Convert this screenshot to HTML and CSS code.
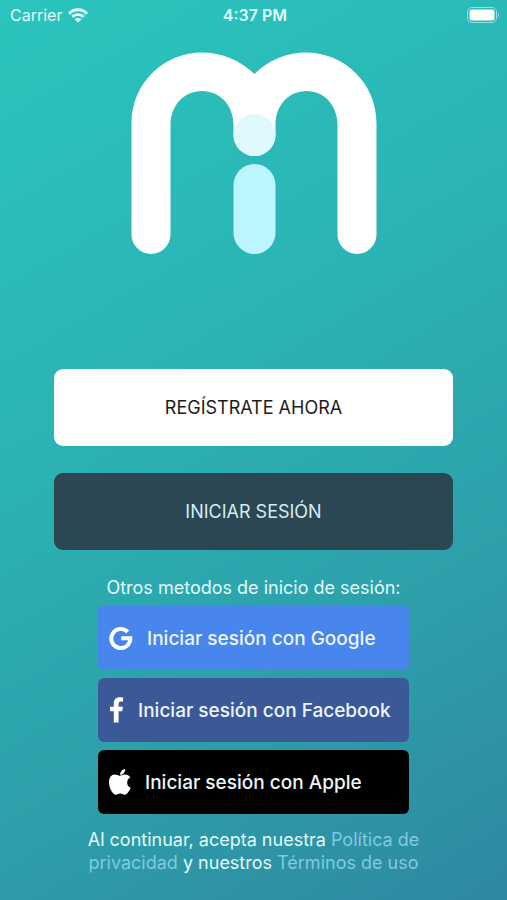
FILE: index.html
```html
<!DOCTYPE html>
<html lang="es">
<head>
    <meta charset="UTF-8">
    <meta name="viewport" content="width=device-width, initial-scale=1">
    <title>Iniciar sesión</title>
    <link rel="stylesheet" href="styles.css">
</head>
<body>
    <header class="status-bar">
        <div class="carrier">
            <span>Carrier</span>
            <svg class="wifi" viewBox="0 0 20 15" aria-hidden="true">
                <path d="M0 4.6C5.500-1.200 14.500-1.200 20 4.600L18 6.700C13.600 2.200 6.400 2.200 2 6.700Z"/>
                <path d="M3.300 8C7 4.200 13 4.200 16.700 8L14.700 10C12 7.400 8 7.400 5.300 10Z"/>
                <path d="M6.600 11.300C8.500 9.500 11.500 9.500 13.400 11.300L10 14.800Z"/>
            </svg>
        </div>
        <span class="time">4:37 PM</span>
        <div class="power">
            <svg class="battery" viewBox="0 0 33 16" aria-hidden="true">
                <rect class="battery-case" x="0.5" y="0.5" width="29" height="15" rx="4.5"/>
                <rect x="2.5" y="2.5" width="25" height="11" rx="2.5"/>
                <path class="battery-tip" d="M31 5.5Q33 8 31 10.5Z"/>
            </svg>
        </div>
    </header>

    <main class="container">
        <svg class="logo" viewBox="0 0 246 203" role="img" aria-label="mi">
            <path class="logo-m" d="M.5 71C.5 32 32 .5 71 .5c20 0 38.500 8 52.500 21.500C137 8.500 155 .5 175 .5c39 0 70.500 31.500 70.500 70.500v111.500a19.500 19.500 0 0 1-39 0V73c0-20-13.500-34-31-34s-31 14-31 34v10a21 21 0 0 1-42 0V73c0-20-14-34-31.500-34s-31.500 14-31.500 34v109.500a19.500 19.500 0 0 1-39 0z"/>
            <circle class="logo-dot" cx="123.5" cy="83" r="21"/>
            <rect class="logo-i" x="102.5" y="112" width="42" height="90" rx="21"/>
        </svg>

        <div class="actions">
            <button type="button" class="btn btn-light">REGÍSTRATE AHORA</button>
            <button type="button" class="btn btn-dark">INICIAR SESIÓN</button>
        </div>

        <p class="other">Otros metodos de inicio de sesión:</p>

        <div class="social">
            <button type="button" class="social-btn google">
                <svg class="icon-google" viewBox="0 0 24 24" aria-hidden="true">
                    <path d="M18.700 6A9.500 9.500 0 1 0 21.300 12.300H12.200"/>
                </svg>
                <span>Iniciar sesión con Google</span>
            </button>
            <button type="button" class="social-btn facebook">
                <svg class="icon-facebook" viewBox="0 0 15 26" aria-hidden="true">
                    <path d="M4.800 25.500V14.200H1V9.700h3.800V6.300C4.800 2.400 7.100.3 10.700.3c1.700 0 3.400.3 3.400.3v4h-2c-1.900 0-2.500 1.100-2.500 2.300v2.800h4.300l-.7 4.500H9.600v11.300z"/>
                </svg>
                <span>Iniciar sesión con Facebook</span>
            </button>
            <button type="button" class="social-btn apple">
                <svg class="icon-apple" viewBox="0 0 22 26" aria-hidden="true">
                    <path d="M18.200 13.700c0-2.400 1.100-4.100 3.200-5.400-1.200-1.700-3-2.600-5.300-2.800-2.200-.2-4.600 1.300-5.500 1.300-1 0-3.100-1.200-4.900-1.200C2.400 5.700 0 8.500 0 13.500c0 5.200 3.600 12.300 7 12.200 1.600 0 2.300-1.100 4.300-1.100s2.600 1.100 4.300 1.100c2.900 0 5.300-5 6-7-2.400-1-3.400-3-3.400-5zM14.900 4c1.100-1.300 1.400-2.900 1.200-4-3.100.5-5.200 3.100-5 5.800 1.700 0 2.900-.8 3.800-1.800z"/>
                </svg>
                <span>Iniciar sesión con Apple</span>
            </button>
        </div>

        <p class="terms">Al continuar, acepta nuestra <a href="#privacidad">Política de privacidad</a> y nuestros <a href="#terminos">Términos de uso</a></p>
    </main>
</body>
</html>
```
FILE: styles.css
```css
* { box-sizing: border-box; }
body { margin: 0; min-height: 100vh; font-family: Inter, "Liberation Sans", sans-serif; color: #e0fafa;
       background: linear-gradient(150deg, #2ac5bd 0%, #2bb5b6 35%, #2da1ab 68%, #2f88a0 100%); }
svg { display: block; fill: #fff; }

.status-bar { display: grid; grid-template-columns: 1fr auto 1fr; align-items: center; height: 30px;
              padding: 0 7px 0 10px; font-size: 16px; }
.carrier { display: flex; align-items: center; gap: 6px; }
.wifi { width: 20px; height: 15px; fill: #e0fafa; }
.time { font-weight: 600; }
.power { display: flex; justify-content: flex-end; }
.battery { width: 33px; height: 16px; }
.battery-case { fill: none; stroke: #9fe0de; }
.battery-tip { fill: #9fe0de; }

.container { padding: 22px 54px 26px; }
.logo { width: 246px; height: 203px; margin: 0 auto 114px; }
.logo-dot { fill: #e0f9fd; }
.logo-i { fill: #bdf5fe; }

.actions { display: flex; flex-direction: column; gap: 27px; }
.btn { height: 77px; border: none; border-radius: 9px; font-family: inherit; font-size: 18px; cursor: pointer; }
.btn-light { background: #fff; color: #1c1c1c; }
.btn-dark { background: #2c4754; color: #d3ecf3; }

.other { margin: 26px 0 6px; font-size: 18px; line-height: 24px; text-align: center; }

.social { display: flex; flex-direction: column; gap: 8px; max-width: 311px; margin: 0 auto; }
.social-btn { display: flex; align-items: center; gap: 14px; height: 64px; padding: 0 11px; border: none;
              border-radius: 6px; color: #ebf5fc; font-family: inherit; font-size: 19px; font-weight: 500;
              white-space: nowrap; cursor: pointer; }
.google { background: #4885ed; }
.facebook { background: #3b5998; }
.apple { background: #000; }
.icon-google { width: 24px; height: 24px; fill: none; stroke: #fff; stroke-width: 4; }
.icon-facebook { width: 15px; height: 26px; }
.icon-apple { width: 22px; height: 26px; }

.terms { max-width: 360px; margin: 14px auto 0; font-size: 18px; line-height: 23px; text-align: center; }
.terms a { color: #7fcbdf; text-decoration: none; }
```
